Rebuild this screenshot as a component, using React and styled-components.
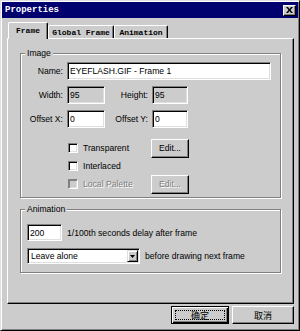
import React from "react"
import styled, { createGlobalStyle } from "styled-components"

const face = "#cccccc"
const shadow = "#808080"
const hilite = "#ffffff"
const light = "#dfdfdf"

const GlobalStyle = createGlobalStyle`
  html, body {
    margin: 0;
    padding: 0;
    background: ${face};
  }
  body {
    font-family: "Liberation Sans", Arial, sans-serif;
    font-size: 8.6px;
    color: #000;
  }
  * {
    box-sizing: border-box;
  }
`

const Window = styled.div`
  width: 300px;
  height: 331px;
  background: ${face};
  border: 1px solid;
  border-color: ${light} #000 #000 ${light};
  box-shadow: inset 1px 1px 0 ${hilite}, inset -1px -1px 0 ${shadow};
  padding: 1px;
  display: flex;
  flex-direction: column;
`

const TitleBar = styled.div`
  height: 16px;
  background: #00006e;
  color: #fff;
  display: flex;
  align-items: center;
  justify-content: space-between;
  padding: 0 2px 0 3px;
`

const Title = styled.span`
  font-family: "Liberation Mono", "Courier New", monospace;
  font-weight: bold;
  font-size: 9px;
`

const CloseButton = styled.div`
  width: 13px;
  height: 11px;
  background: ${face};
  border: 1px solid;
  border-color: ${hilite} #000 #000 ${hilite};
  box-shadow: inset -1px -1px 0 ${shadow};
  display: flex;
  align-items: center;
  justify-content: center;
`

const Body = styled.div`
  flex: 1;
  display: flex;
  flex-direction: column;
  padding: 4px 4px 0 5px;
`

const TabRow = styled.div`
  display: flex;
  align-items: flex-end;
  height: 16px;
  padding-left: 1px;
  position: relative;
  z-index: 1;
`

const Tab = styled.div`
  width: ${(p) => p.$w}px;
  height: ${(p) => (p.$active ? 17 : 13)}px;
  margin-bottom: ${(p) => (p.$active ? -1 : 0)}px;
  background: ${face};
  border-top: 1px solid ${hilite};
  border-left: 1px solid ${hilite};
  border-right: 1px solid #000;
  border-radius: 2px 2px 0 0;
  box-shadow: inset -1px 0 0 ${shadow};
  font-family: "Liberation Mono", "Courier New", monospace;
  font-weight: bold;
  font-size: 8px;
  display: flex;
  align-items: center;
  justify-content: center;
  padding-bottom: ${(p) => (p.$active ? 2 : 0)}px;
`

const Panel = styled.div`
  height: 266px;
  border: 1px solid;
  border-color: ${hilite} #000 #000 ${hilite};
  box-shadow: inset -1px -1px 0 ${shadow};
  padding: 9px 12px 0 12px;
  display: flex;
  flex-direction: column;
`

const GroupBox = styled.fieldset`
  margin: ${(p) => p.$top || 0}px 0 0 0;
  padding: 0;
  min-width: 0;
  border: 1px solid ${shadow};
  box-shadow: inset 1px 1px 0 ${hilite}, 1px 1px 0 ${hilite};
`

const Legend = styled.legend`
  margin-left: 4px;
  padding: 0 2px;
  line-height: 10px;
  background: ${face};
`

const FormGrid = styled.div`
  display: grid;
  grid-template-columns: 42px 38px 39px 36px 1fr;
  grid-auto-rows: 18px;
  column-gap: 4px;
  row-gap: 6px;
  padding: 4px 9px 0 0;
`

const Label = styled.label`
  justify-self: end;
  align-self: center;
  white-space: nowrap;
`

const TextField = styled.input`
  grid-column: ${(p) => p.$span || "auto"};
  width: ${(p) => (p.$w ? `${p.$w}px` : "100%")};
  height: ${(p) => p.$h || 18}px;
  margin: 0;
  padding: 0 2px;
  border: 1px solid;
  border-color: ${shadow} ${hilite} ${hilite} ${shadow};
  box-shadow: inset 1px 1px 0 #000, inset -1px -1px 0 ${light};
  background: ${(p) => (p.readOnly ? face : "#fff")};
  font-family: "Liberation Sans", Arial, sans-serif;
  font-size: 8.6px;
  color: #000;
  outline: none;
`

const CheckList = styled.div`
  display: grid;
  grid-template-columns: 84px 38px;
  grid-auto-rows: 18px;
  align-items: center;
  margin: 11px 0 0 46px;
  padding-bottom: 4px;
`

const CheckLabel = styled.div`
  grid-column: 1;
  display: flex;
  align-items: center;
  gap: 5px;
  padding-left: 1px;
  color: ${(p) => (p.$disabled ? shadow : "#000")};
  text-shadow: ${(p) => (p.$disabled ? `1px 1px 0 ${hilite}` : "none")};
`

const Box = styled.span`
  width: 10px;
  height: 10px;
  flex: none;
  border: 1px solid;
  border-color: ${shadow} ${hilite} ${hilite} ${shadow};
  box-shadow: inset 1px 1px 0 ${(p) => (p.$disabled ? shadow : "#000")},
    inset -1px -1px 0 ${light};
  background: ${(p) => (p.$disabled ? face : "#fff")};
`

const Button = styled.button`
  grid-column: ${(p) => p.$col || "auto"};
  width: ${(p) => p.$w}px;
  height: ${(p) => p.$h || 19}px;
  margin: 0;
  padding: 0;
  background: ${face};
  border: 1px solid;
  border-color: ${(p) => (p.$default ? "#000" : `${hilite} #000 #000 ${hilite}`)};
  box-shadow: ${(p) =>
    p.$default
      ? `inset 1px 1px 0 ${hilite}, inset -1px -1px 0 #000, inset -2px -2px 0 ${shadow}`
      : `inset -1px -1px 0 ${shadow}`};
  font-family: ${(p) =>
    p.$cjk
      ? `"Noto Sans CJK SC", "Liberation Sans", sans-serif`
      : `"Liberation Sans", Arial, sans-serif`};
  font-size: ${(p) => (p.$cjk ? 9 : 8.6)}px;
  color: ${(p) => (p.disabled ? shadow : "#000")};
  text-shadow: ${(p) => (p.disabled ? `1px 1px 0 ${hilite}` : "none")};
  display: flex;
  align-items: center;
  justify-content: center;
`

const FocusRing = styled.span`
  flex: 1;
  align-self: stretch;
  margin: 3px;
  border: 1px dotted #000;
  display: flex;
  align-items: center;
  justify-content: center;
  line-height: 1;
`

const AnimBody = styled.div`
  display: flex;
  flex-direction: column;
  gap: 7px;
  padding: 10px 0 8px 6px;
`

const AnimRow = styled.div`
  display: flex;
  align-items: center;
  gap: 5px;
  white-space: nowrap;
`

const Select = styled.div`
  width: 113px;
  height: 16px;
  border: 1px solid;
  border-color: ${shadow} ${hilite} ${hilite} ${shadow};
  box-shadow: inset 1px 1px 0 #000, inset -1px -1px 0 ${light};
  background: #fff;
  display: flex;
  align-items: center;
  justify-content: space-between;
  padding: 1px 1px 1px 3px;
`

const SelectArrow = styled.span`
  width: 11px;
  height: 12px;
  background: ${face};
  border: 1px solid;
  border-color: ${light} #000 #000 ${light};
  box-shadow: inset 1px 1px 0 ${hilite}, inset -1px -1px 0 ${shadow};
  display: flex;
  align-items: center;
  justify-content: center;
`

const Footer = styled.div`
  display: flex;
  justify-content: flex-end;
  gap: 3px;
  padding-top: 2px;
`

export default function App() {
  return (
    <>
      <GlobalStyle />
      <Window>
        <TitleBar>
          <Title>Properties</Title>
          <CloseButton>
            <svg width="7" height="6" viewBox="0 0 7 6">
              <path d="M0 0h2l1.5 2 1.5-2h2L4.5 3 7 6H5L3.5 4 2 6H0l2.5-3z" fill="#000" />
            </svg>
          </CloseButton>
        </TitleBar>
        <Body>
          <TabRow>
            <Tab $active $w={40}>Frame</Tab>
            <Tab $w={66}>Global Frame</Tab>
            <Tab $w={54}>Animation</Tab>
          </TabRow>
          <Panel>
            <GroupBox>
              <Legend>Image</Legend>
              <FormGrid>
                <Label>Name:</Label>
                <TextField $span="2 / -1" defaultValue="EYEFLASH.GIF - Frame 1" />
                <Label>Width:</Label>
                <TextField readOnly defaultValue="95" />
                <Label>Height:</Label>
                <TextField readOnly defaultValue="95" />
                <span />
                <Label>Offset X:</Label>
                <TextField defaultValue="0" />
                <Label>Offset Y:</Label>
                <TextField defaultValue="0" />
              </FormGrid>
              <CheckList>
                <CheckLabel>
                  <Box />
                  Transparent
                </CheckLabel>
                <Button $col={2} $w={38}>Edit...</Button>
                <CheckLabel>
                  <Box />
                  Interlaced
                </CheckLabel>
                <CheckLabel $disabled>
                  <Box $disabled />
                  Local Palette
                </CheckLabel>
                <Button $col={2} $w={38} disabled>Edit...</Button>
              </CheckList>
            </GroupBox>
            <GroupBox $top={6}>
              <Legend>Animation</Legend>
              <AnimBody>
                <AnimRow>
                  <TextField $w={35} $h={17} defaultValue="200" />
                  1/100th seconds delay after frame
                </AnimRow>
                <AnimRow>
                  <Select>
                    Leave alone
                    <SelectArrow>
                      <svg width="5" height="3" viewBox="0 0 5 3">
                        <path d="M0 0h5L2.5 3z" fill="#000" />
                      </svg>
                    </SelectArrow>
                  </Select>
                  before drawing next frame
                </AnimRow>
              </AnimBody>
            </GroupBox>
          </Panel>
          <Footer>
            <Button $default $cjk $w={58} $h={18}>
              <FocusRing>确定</FocusRing>
            </Button>
            <Button $cjk $w={62} $h={18}>取消</Button>
          </Footer>
        </Body>
      </Window>
    </>
  )
}
